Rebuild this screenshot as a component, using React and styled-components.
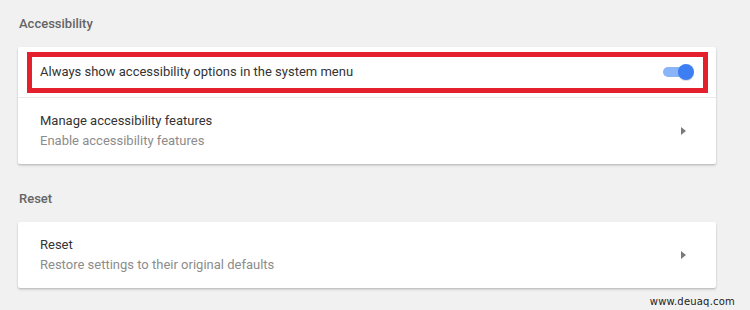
import React from "react";
import styled, { createGlobalStyle } from "styled-components";

const GlobalStyle = createGlobalStyle`
  html, body {
    margin: 0;
    padding: 0;
    background: #f1f1f1;
  }
  body {
    font-family: Roboto, "Liberation Sans", Arial, sans-serif;
    -webkit-font-smoothing: antialiased;
  }
`;

const Page = styled.div`
  position: relative;
  width: 750px;
  height: 310px;
  box-sizing: border-box;
  padding: 0 34px 0 18px;
  overflow: hidden;
`;

const SectionTitle = styled.div`
  height: 47px;
  margin-top: ${(p) => p.gap || 0}px;
  display: flex;
  align-items: center;
  padding-left: 1px;
  font-size: 13px;
  font-weight: 500;
  color: #656565;
`;

const Card = styled.div`
  background: #fff;
  border-radius: 2px;
  box-shadow: 0 1px 2px rgba(0, 0, 0, 0.18), 0 2px 3px rgba(0, 0, 0, 0.08);
`;

const Row = styled.div`
  position: relative;
  height: ${(p) => p.h}px;
  display: flex;
  align-items: center;
  justify-content: space-between;
  padding: 0 22px 0 22px;
  & + & {
    border-top: 1px solid #ebebeb;
  }
`;

const Text = styled.div`
  display: flex;
  flex-direction: column;
  gap: 4px;
`;

const Title = styled.div`
  font-size: 13px;
  line-height: 16px;
  color: #333;
`;

const Sub = styled.div`
  font-size: 13px;
  line-height: 16px;
  color: #8c8c8c;
`;

const Highlight = styled.div`
  position: absolute;
  left: 9px;
  right: 8px;
  top: 5px;
  bottom: 4px;
  border: 5px solid #e3202b;
  pointer-events: none;
`;

const Toggle = styled.div`
  position: relative;
  width: 27px;
  height: 10px;
  margin-right: 4px;
  border-radius: 5px;
  background: #8ab4f8;
`;

const Knob = styled.div`
  position: absolute;
  right: -4px;
  top: -3px;
  width: 16px;
  height: 16px;
  border-radius: 50%;
  background: #3d7ef2;
  box-shadow: 0 1px 1px rgba(0, 0, 0, 0.15);
`;

const Arrow = styled.div`
  width: 0;
  height: 0;
  margin-right: 8px;
  border-top: 4px solid transparent;
  border-bottom: 4px solid transparent;
  border-left: 5px solid #7a7a7a;
`;

const Watermark = styled.div`
  position: absolute;
  right: 15px;
  bottom: 3px;
  font-family: "DejaVu Sans", sans-serif;
  font-size: 10px;
  letter-spacing: 0.2px;
  color: #222;
`;

export default function App() {
  return (
    <Page>
      <GlobalStyle />
      <SectionTitle>Accessibility</SectionTitle>
      <Card>
        <Row h={50}>
          <Title>Always show accessibility options in the system menu</Title>
          <Toggle>
            <Knob />
          </Toggle>
          <Highlight />
        </Row>
        <Row h={66}>
          <Text>
            <Title>Manage accessibility features</Title>
            <Sub>Enable accessibility features</Sub>
          </Text>
          <Arrow />
        </Row>
      </Card>

      <SectionTitle gap={11}>Reset</SectionTitle>
      <Card>
        <Row h={66}>
          <Text>
            <Title>Reset</Title>
            <Sub>Restore settings to their original defaults</Sub>
          </Text>
          <Arrow />
        </Row>
      </Card>
      <Watermark>www.deuaq.com</Watermark>
    </Page>
  );
}
